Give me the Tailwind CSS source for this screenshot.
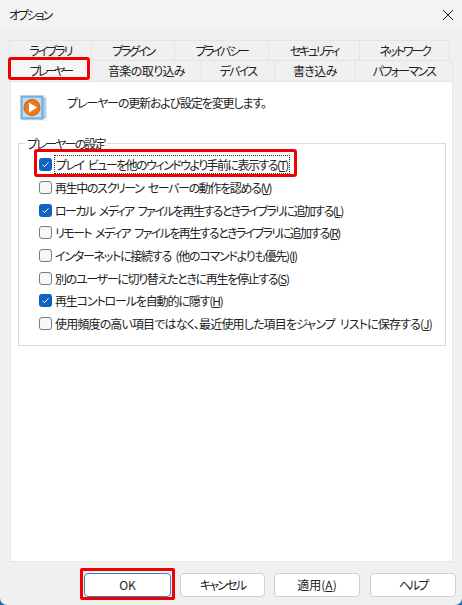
<!DOCTYPE html>
<html lang="ja">
<head>
    <meta charset="UTF-8">
    <title>オプション</title>
    <script src="https://cdn.jsdelivr.net/npm/@tailwindcss/browser@4"></script>
</head>
<body class="bg-[#1f6cae] w-[462px] h-[605px] overflow-hidden">
    <div class="w-full h-full rounded-[7px] bg-[#f0f0f0] text-[#222] text-[12px] whitespace-nowrap font-['Noto_Sans_CJK_JP','Noto_Sans',sans-serif] [font-feature-settings:'palt'] [word-spacing:3px] flex flex-col">

        <!-- title bar -->
        <div class="h-[30px] pl-[9px] pr-[8px] flex items-center justify-between bg-[#f3f3f3] shrink-0">
            <span class="tracking-[-2.2px]">オプション</span>
            <svg class="w-[12px] h-[12px]" viewBox="0 0 12 12"><path d="M1 1l10 10M11 1L1 11" stroke="#222" stroke-width="1" fill="none"/></svg>
        </div>

        <!-- tabs -->
        <div class="h-[10px] shrink-0"></div>
        <div class="flex pl-[9px] h-[20px] shrink-0">
            <div class="w-[83px] flex items-center justify-center border border-b-0 border-[#e4e4e4] tracking-[-1.9px]">ライブラリ</div>
            <div class="w-[83px] flex items-center justify-center border border-b-0 border-l-0 border-[#e4e4e4] tracking-[-2.4px]">プラグイン</div>
            <div class="w-[94px] flex items-center justify-center border border-b-0 border-l-0 border-[#e4e4e4] tracking-[-2.3px]">プライバシー</div>
            <div class="w-[91px] flex items-center justify-center border border-b-0 border-l-0 border-[#e4e4e4] tracking-[-2.3px]">セキュリティ</div>
            <div class="w-[90px] flex items-center justify-center border border-b-0 border-l-0 border-[#e4e4e4] tracking-[-2.2px]">ネットワーク</div>
        </div>
        <div class="flex pl-[10px] h-[21px] shrink-0">
            <div class="relative w-[81px] flex items-center justify-center bg-[#f6f6f6]">
                <span class="tracking-[-3px]">プレーヤー</span>
                <div class="absolute left-[-2px] top-[-3px] w-[82px] h-[23px] border-[3px] border-[#f00000] rounded-[3px]"></div>
            </div>
            <div class="w-[111px] flex items-center justify-center border border-b-0 border-[#e4e4e4] tracking-[-0.6px]">音楽の取り込み</div>
            <div class="w-[73px] flex items-center justify-center border border-b-0 border-l-0 border-[#e4e4e4] tracking-[-1.75px]">デバイス</div>
            <div class="w-[81px] flex items-center justify-center border border-b-0 border-l-0 border-[#e4e4e4] tracking-[-0.5px]">書き込み</div>
            <div class="w-[97px] flex items-center justify-center border border-b-0 border-l-0 border-[#e4e4e4] tracking-[-1.7px]">パフォーマンス</div>
        </div>

        <!-- panel -->
        <div class="ml-[10px] w-[443px] h-[481px] shrink-0 bg-white border border-[#e6e6e6] pl-[7px] pr-[6px] pt-[13px]">
            <div class="flex h-[25px] pl-[2px]">
                <svg class="w-[28px] h-[26px] shrink-0" viewBox="0 0 28 26">
                    <path d="M3 25h24" stroke="#e2e2e2" stroke-width="1"/>
                    <rect x="23" y="3" width="3" height="20" fill="#b9d6ec" stroke="#7fb0d6" stroke-width=".5"/>
                    <rect x="1" y="1" width="22" height="23" fill="#8dbce2" stroke="#6aa2cf"/>
                    <rect x="3" y="3" width="18" height="19" fill="#c0dcf1"/>
                    <circle cx="12" cy="12.5" r="8" fill="#ec7a1c" stroke="#c85f10"/>
                    <path d="M9 7.5l8 5-8 5z" fill="#fff"/>
                </svg>
                <span class="ml-[19px] mt-[-1px] leading-[18px] tracking-[-1.15px]">プレーヤーの更新および設定を変更します。</span>
            </div>

            <!-- group -->
            <div class="relative mt-[23px] h-[203px] border border-[#dcdcdc] pl-[20px] pt-[9px]">
                <span class="absolute left-[6px] top-[-9px] px-[2px] bg-white leading-[17px] tracking-[-1.8px]">プレーヤーの設定</span>

                <div class="relative h-[23px] flex items-center">
                    <span class="w-[13px] h-[13px] rounded-[3px] bg-[#0f62c0] flex items-center justify-center shrink-0"><svg class="w-[9px] h-[9px]" viewBox="0 0 9 9"><path d="M1.5 4.7l2 2 4-4.4" stroke="#fff" stroke-width="1" fill="none"/></svg></span>
                    <span class="ml-[2px] px-[1px] border border-dotted border-[#333] leading-[17px] tracking-[-1.54px]">プレイ ビューを他のウィンドウより手前に表示する(<u>T</u>)</span>
                    <div class="absolute left-[-5px] top-[-4px] w-[263px] h-[28px] border-[3px] border-[#f00000] rounded-[3px]"></div>
                </div>
                <div class="h-[23px] flex items-center">
                    <span class="w-[13px] h-[13px] rounded-[3px] bg-[#f8f8f8] border border-[#7a7a7a] shrink-0"></span>
                    <span class="ml-[3px] leading-[17px] tracking-[-1.37px]">再生中のスクリーン セーバーの動作を認める(<u>V</u>)</span>
                </div>
                <div class="h-[22px] flex items-center">
                    <span class="w-[13px] h-[13px] rounded-[3px] bg-[#0f62c0] flex items-center justify-center shrink-0"><svg class="w-[9px] h-[9px]" viewBox="0 0 9 9"><path d="M1.5 4.7l2 2 4-4.4" stroke="#fff" stroke-width="1" fill="none"/></svg></span>
                    <span class="ml-[3px] leading-[17px] tracking-[-1.58px]">ローカル メディア ファイルを再生するときライブラリに追加する(<u>L</u>)</span>
                </div>
                <div class="h-[23px] flex items-center">
                    <span class="w-[13px] h-[13px] rounded-[3px] bg-[#f8f8f8] border border-[#7a7a7a] shrink-0"></span>
                    <span class="ml-[3px] leading-[17px] tracking-[-1.59px]">リモート メディア ファイルを再生するときライブラリに追加する(<u>R</u>)</span>
                </div>
                <div class="h-[23px] flex items-center">
                    <span class="w-[13px] h-[13px] rounded-[3px] bg-[#f8f8f8] border border-[#7a7a7a] shrink-0"></span>
                    <span class="ml-[3px] leading-[17px] tracking-[-1.24px]">インターネットに接続する (他のコマンドよりも優先)(<u>I</u>)</span>
                </div>
                <div class="h-[22px] flex items-center">
                    <span class="w-[13px] h-[13px] rounded-[3px] bg-[#f8f8f8] border border-[#7a7a7a] shrink-0"></span>
                    <span class="ml-[3px] leading-[17px] tracking-[-1.32px]">別のユーザーに切り替えたときに再生を停止する(<u>S</u>)</span>
                </div>
                <div class="h-[23px] flex items-center">
                    <span class="w-[13px] h-[13px] rounded-[3px] bg-[#0f62c0] flex items-center justify-center shrink-0"><svg class="w-[9px] h-[9px]" viewBox="0 0 9 9"><path d="M1.5 4.7l2 2 4-4.4" stroke="#fff" stroke-width="1" fill="none"/></svg></span>
                    <span class="ml-[3px] leading-[17px] tracking-[-1.15px]">再生コントロールを自動的に隠す(<u>H</u>)</span>
                </div>
                <div class="h-[22px] flex items-center">
                    <span class="w-[13px] h-[13px] rounded-[3px] bg-[#f8f8f8] border border-[#7a7a7a] shrink-0"></span>
                    <span class="ml-[3px] leading-[17px] tracking-[-0.85px]">使用頻度の高い項目ではなく、最近使用した項目をジャンプ リストに保存する(<u>J</u>)</span>
                </div>
            </div>
        </div>

        <!-- buttons -->
        <div class="flex pl-[84px] mt-[11px]">
            <div class="relative w-[87px] h-[24px] rounded-[4px] bg-white border border-[#2f84d0] flex items-center justify-center">
                OK
                <div class="absolute left-[-5px] top-[-6px] w-[95px] h-[32px] border-[3px] border-[#f00000] rounded-[2px]"></div>
            </div>
            <div class="ml-[9px] w-[85px] h-[24px] rounded-[4px] bg-white border border-[#d0d0d0] flex items-center justify-center tracking-[-1.8px]">キャンセル</div>
            <div class="ml-[9px] w-[86px] h-[24px] rounded-[4px] bg-white border border-[#d0d0d0] flex items-center justify-center"><span>適用(<u>A</u>)</span></div>
            <div class="ml-[10px] w-[86px] h-[24px] rounded-[4px] bg-white border border-[#d0d0d0] flex items-center justify-center tracking-[-2px]">ヘルプ</div>
        </div>
    </div>
</body>
</html>
